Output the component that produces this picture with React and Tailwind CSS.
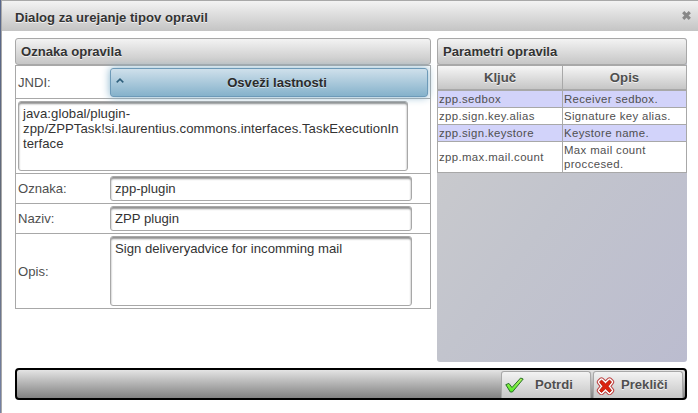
import React from "react";

const PANEL_HEADER =
  "flex h-[27px] shrink-0 items-center rounded-[3px] border border-[#a8a8a8] bg-linear-to-b from-[#f3f3f3] to-[#c6c6c6] px-[5px] text-[13.1px] font-bold text-[#333] [text-shadow:0_1px_0_rgba(255,255,255,0.7)]";
const FIELD =
  "rounded-[3px] border border-[#a8a8a8] bg-white px-1 text-[13.15px] leading-[15px] text-[#333] shadow-[inset_0_2px_2px_#8f8f8f]";

function Row({ label, height, children }) {
  return (
    <div className={`flex shrink-0 items-center border-b border-[#a8a8a8] ${height}`}>
      <div className="w-[94px] shrink-0 pt-px pl-[2px] text-[13.1px] text-[#4f4f4f]">{label}</div>
      {children}
    </div>
  );
}

const PARAMS = [
  ["zpp.sedbox", "Receiver sedbox."],
  ["zpp.sign.key.alias", "Signature key alias."],
  ["zpp.sign.keystore", "Keystore name."],
  ["zpp.max.mail.count", "Max mail count proccesed."],
];

function Params() {
  return (
    <section className="flex h-[324px] w-[250px] flex-col rounded-[3px] bg-linear-to-br from-[#cdcdcd] via-[#c2c4cd] to-[#bbbccf]">
      <div className={PANEL_HEADER}>Parametri opravila</div>
      <div className="grid grid-cols-[125px_123px] border-x border-[#a8a8a8] text-[11.4px] leading-[14px] tracking-[0.37px] text-[#4f4f4f]">
        {["Ključ", "Opis"].map((t, i) => (
          <div
            key={t}
            className={`flex h-[26px] items-center justify-center border-t border-b-2 border-[#a8a8a8] bg-linear-to-b from-[#f6f6f6] to-[#c6c6c6] pt-px text-[13.2px] font-bold tracking-normal [text-shadow:0_1px_0_rgba(255,255,255,0.7)] ${i === 0 ? "border-r" : ""}`}
          >
            {t}
          </div>
        ))}
        {PARAMS.map(([key, text], i) => (
          <React.Fragment key={key}>
            <div
              className={`flex items-center border-r border-b border-[#a8a8a8] pl-px ${i === 3 ? "h-[31px]" : "h-[17px]"} ${i % 2 ? "bg-white" : "bg-[#d2d3fa]"}`}
            >
              {key}
            </div>
            <div
              className={`flex items-center border-b border-[#a8a8a8] px-px ${i % 2 ? "bg-white" : "bg-[#d2d3fa]"}`}
            >
              {text}
            </div>
          </React.Fragment>
        ))}
      </div>
    </section>
  );
}

function FooterButton({ icon, label, spacing }) {
  return (
    <button
      className={`flex h-[27px] w-[90px] items-center rounded-t-[3px] border border-b-0 border-[#a8a8a8] bg-linear-to-b from-[#f3f3f3] to-[#c6c6c6] text-[13.1px] font-bold text-[#4f4f4f] [text-shadow:0_1px_0_rgba(255,255,255,0.7)] ${spacing}`}
    >
      {icon}
      <span>{label}</span>
    </button>
  );
}

const CheckIcon = (
  <svg width="19" height="18" viewBox="0 0 19 18" className="shrink-0">
    <defs>
      <linearGradient id="ok" x1="0" y1="0" x2="0" y2="1">
        <stop offset="0" stopColor="#b5ef62" />
        <stop offset="1" stopColor="#4fec24" />
      </linearGradient>
    </defs>
    <path d="M.8 8.7 3.9 7.4 7 11.5 15.6 2 18.2 3 7.4 16 5.3 16Z" fill="url(#ok)" stroke="#267026" strokeWidth="1" strokeLinejoin="round" />
  </svg>
);

const CROSS = "M5.5 3 9.5 6.8 13.5 3 15.5 5 12.2 9.3 15.5 13.5 13.5 15.5 9.5 11.8 5.5 15.5 3.5 13.5 6.8 9.3 3.5 5Z";

const CrossIcon = (
  <svg width="19" height="18" viewBox="0 0 19 18" className="mt-[2px] shrink-0">
    <path d={CROSS} fill="#bd4545" stroke="#bd4545" strokeWidth="5.4" strokeLinejoin="round" />
    <path d={CROSS} fill="#fff" stroke="#fff" strokeWidth="3.4" strokeLinejoin="round" />
    <path d={CROSS} fill="#dc220e" stroke="#a81a0c" strokeWidth=".8" strokeLinejoin="round" />
  </svg>
);

export default function App() {
  return (
    <div className="flex h-[413px] w-[698px] overflow-hidden bg-white font-['Liberation_Sans',Arial,sans-serif]">
      <div className="w-px shrink-0 bg-linear-to-b from-[#58678c] via-[#636b78] to-[#7481a5]" />
      <div className="flex w-[697px] flex-col border-t border-l border-[#a8a8a8]">
        <header className="flex h-[30px] shrink-0 items-center justify-between bg-linear-to-b from-[#f3f3f3] to-[#c4c4c4] pr-[7px] pl-[13px] pt-[3px] text-[13.1px] font-bold text-[#333] [text-shadow:0_1px_0_rgba(255,255,255,0.7)]">
          <span>Dialog za urejanje tipov opravil</span>
          <svg width="9" height="9" viewBox="0 0 9 9" className="mb-[5px]">
            <path d="M1.2 1.2 7.8 7.8M7.8 1.2 1.2 7.8" stroke="#888" strokeWidth="3.1" />
          </svg>
        </header>
        <main className="mt-[7px] ml-[13px] flex h-[324px] shrink-0 gap-[6px]">
          <section className="w-[416px]">
            <div className={PANEL_HEADER}>Oznaka opravila</div>
            <div className="border-x border-t border-[#a8a8a8]">
              <Row label="JNDI:" height="h-[33px]">
                <button className="mt-px flex h-[29px] w-[318px] shrink-0 items-center rounded-[3px] border border-[#6d9ab8] bg-linear-to-b from-[#cfe0eb] to-[#85b2cb] text-[13.1px] font-bold text-[#2b2b2b] [box-shadow:0_0_8px_#85b2cb] [text-shadow:0_1px_0_rgba(255,255,255,0.5)]">
                  <svg width="8" height="5" viewBox="0 0 8 5" className="ml-[5px] -mt-[5px] shrink-0">
                    <path d="M.7 4.3 4 1.2 7.3 4.3" fill="none" stroke="#2e5f7c" strokeWidth="1.6" />
                  </svg>
                  <span className="flex-1 pl-[3px]">Osveži lastnosti</span>
                </button>
              </Row>
              <div className="h-[75px] border-b border-[#a8a8a8] pt-[2px] pl-[2px]">
                <div className={`${FIELD} h-[70px] w-[390px] pt-[4px] tracking-[0.065px]`}>
                  java:global/plugin-
                  <br />
                  zpp/ZPPTask!si.laurentius.commons.interfaces.TaskExecutionIn
                  <br />
                  terface
                </div>
              </div>
              <Row label="Oznaka:" height="h-[30px]">
                <div className={`${FIELD} h-[25px] w-[302px] pt-[4px]`}>zpp-plugin</div>
              </Row>
              <Row label="Naziv:" height="h-[30px]">
                <div className={`${FIELD} h-[25px] w-[302px] pt-[4px]`}>ZPP plugin</div>
              </Row>
              <Row label="Opis:" height="h-[75px]">
                <div className={`${FIELD} h-[70px] w-[302px] pt-[4px]`}>Sign deliveryadvice for incomming mail</div>
              </Row>
            </div>
          </section>
          <Params />
        </main>
        <footer className="mt-[6px] ml-[13px] flex h-[32px] w-[672px] shrink-0 items-end justify-end gap-[2px] rounded-[4px] border-2 border-black bg-linear-to-b from-[#e4e4e4] to-[#828282] pr-[2px]">
          <FooterButton icon={CheckIcon} label="Potrdi" spacing="gap-[11px] pl-[3px]" />
          <FooterButton icon={CrossIcon} label="Prekliči" spacing="gap-[6px] pl-[2px]" />
        </footer>
      </div>
    </div>
  );
}
